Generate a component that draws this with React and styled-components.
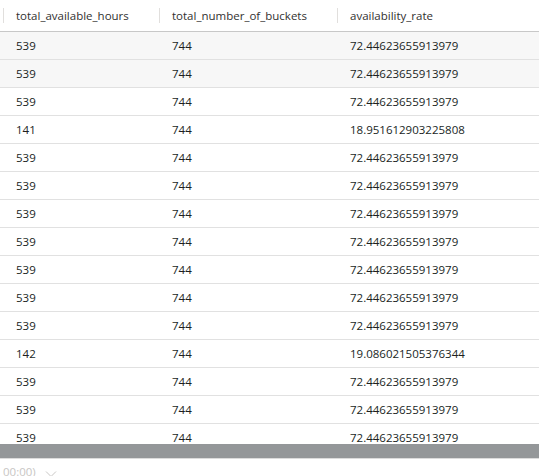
import styled, { createGlobalStyle } from 'styled-components';

const GlobalStyle = createGlobalStyle`
  html, body {
    margin: 0;
    padding: 0;
    background: #ffffff;
    overflow: hidden;
  }
  body {
    font-family: "Open Sans", "Noto Sans", sans-serif;
  }
`;

const Page = styled.div`
  width: 539px;
  height: 476px;
  display: flex;
  flex-direction: column;
  overflow: hidden;
`;

const Grid = styled.div`
  height: 444px;
  flex-shrink: 0;
  overflow: hidden;
`;

const Row = styled.div`
  display: grid;
  grid-template-columns: 159px 178px 1fr;
  height: ${(p) => (p.$header ? '31px' : '27px')};
  align-items: center;
  border-bottom: 1px solid ${(p) => (p.$header ? '#c8c8c8' : '#e1e1e1')};
  background: ${(p) => (p.$shaded ? '#f7f7f7' : '#ffffff')};
`;

const HeadCell = styled.div`
  position: relative;
  padding-left: ${(p) => (p.$first ? '16px' : '13px')};
  font-size: 11.5px;
  color: #323130;
  white-space: nowrap;
  overflow: hidden;
  margin-top: -1px;

  &::before {
    content: '';
    position: absolute;
    left: ${(p) => (p.$first ? '3px' : '0')};
    top: 0;
    height: 16px;
    width: 1px;
    background: #e1dfdd;
  }
`;

const Cell = styled.div`
  padding-left: ${(p) => (p.$first ? '16px' : '13px')};
  font-size: 11.5px;
  color: #201f1e;
  white-space: nowrap;
  overflow: hidden;
`;

const Scrollbar = styled.div`
  height: 14px;
  flex-shrink: 0;
  background: #949799;
  border-bottom: 1px solid #dcdcdc;
`;

const Footer = styled.div`
  flex: 1;
  display: flex;
  align-items: flex-start;
  gap: 9px;
  padding: 5px 0 0 3px;
  font-size: 11.5px;
  color: #c8c6c4;
  white-space: nowrap;
  overflow: hidden;
`;

const Chevron = styled.svg`
  width: 12px;
  height: 8px;
  margin-top: 6px;
  flex-shrink: 0;
`;

const rows = [
  ['539', '744', '72.44623655913979'],
  ['539', '744', '72.44623655913979'],
  ['539', '744', '72.44623655913979'],
  ['141', '744', '18.951612903225808'],
  ['539', '744', '72.44623655913979'],
  ['539', '744', '72.44623655913979'],
  ['539', '744', '72.44623655913979'],
  ['539', '744', '72.44623655913979'],
  ['539', '744', '72.44623655913979'],
  ['539', '744', '72.44623655913979'],
  ['539', '744', '72.44623655913979'],
  ['142', '744', '19.086021505376344'],
  ['539', '744', '72.44623655913979'],
  ['539', '744', '72.44623655913979'],
  ['539', '744', '72.44623655913979'],
];

export default function App() {
  return (
    <Page>
      <GlobalStyle />
      <Grid>
        <Row $header>
          <HeadCell $first>total_available_hours</HeadCell>
          <HeadCell>total_number_of_buckets</HeadCell>
          <HeadCell>availability_rate</HeadCell>
        </Row>
        {rows.map((r, i) => (
          <Row key={i} $shaded={i < 2}>
            <Cell $first>{r[0]}</Cell>
            <Cell>{r[1]}</Cell>
            <Cell>{r[2]}</Cell>
          </Row>
        ))}
      </Grid>
      <Scrollbar />
      <Footer>
        <span>00:00)</span>
        <Chevron viewBox="0 0 12 8">
          <path d="M1 1.5 L6 6.5 L11 1.5" fill="none" stroke="#c8c6c4" strokeWidth="1" />
        </Chevron>
      </Footer>
    </Page>
  );
}
